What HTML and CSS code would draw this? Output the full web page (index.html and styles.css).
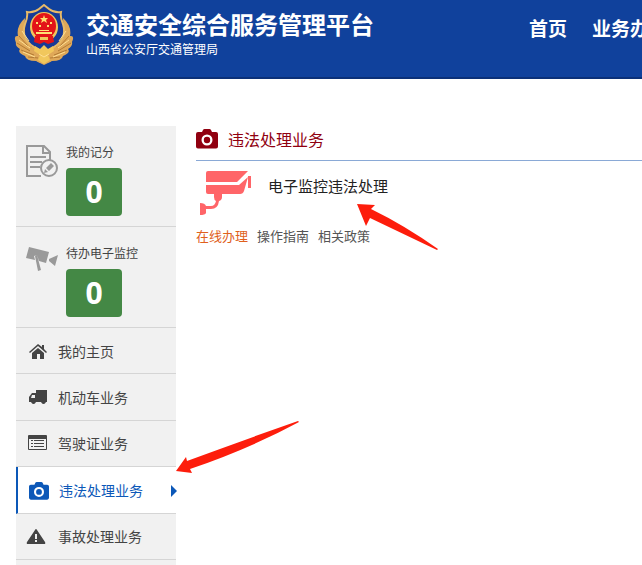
FILE: index.html
```html
<!DOCTYPE html>
<html lang="zh-CN">
<head>
<meta charset="utf-8">
<meta name="viewport" content="width=device-width, initial-scale=1">
<title>交通安全综合服务管理平台</title>
<link rel="stylesheet" href="styles.css">
</head>
<body>
<svg class="defs" aria-hidden="true">
  <symbol id="camera" viewBox="0 0 22 20">
    <path fill-rule="evenodd" d="M2 3h4l1-2q.5-1 1.500-1h5q1 0 1.500 1l1 2h4q2 0 2 2v12.500q0 2-2 2H2q-2 0-2-2V5q0-2 2-2zM11 5.500a5.500 5.500 0 1 0 0 11a5.500 5.500 0 1 0 0-11zm0 2.300a3.200 3.200 0 1 1 0 6.400a3.200 3.200 0 1 1 0-6.400z"/>
  </symbol>
</svg>
<header class="header">
  <svg class="emblem" viewBox="0 0 60 62" aria-hidden="true">
    <g fill="#dfa858">
      <path d="M11 14Q2 22 4 32Q-1 31 2 39Q1 42 6 45Q3 49 11 52Q12 57 22 57L30 61L38 57Q48 57 49 52Q57 49 54 45Q59 42 58 38Q61 31 56 32Q58 22 49 14L50 33L42 43L30 49L18 43L10 33Z"/>
      <path d="M18 42L30 46L42 42L45 50L36 58L30 60L24 58L15 50Z"/>
    </g>
    <path fill="#173a96" stroke="#e8ba68" stroke-width="2" d="M30 1L35 5Q40 9 47 8Q46 13 49 20Q53 33 43 41Q38 45 30 48Q22 45 17 41Q7 33 11 20Q14 13 13 8Q20 9 25 5Z"/>
    <ellipse cx="30" cy="23" rx="14" ry="15" fill="#f1c75c"/>
    <ellipse cx="30" cy="22" rx="12" ry="13" fill="#e31418"/>
    <path fill="#ffe071" d="M30 11l1 3h3l-2 2 1 3-3-2-3 2 1-3-2-2h3zM22 18h2v2h-2zM36 18h2v2h-2zM25 21h2v2h-2zM33 21h2v2h-2zM22 28h16v2H22zM25 26h10v1H25z"/>
    <path fill="#e31418" d="M21 32h18l1 6-6 2-4-2-4 2-6-2z"/>
    <path fill="#f1c75c" d="M26 33h8v3h-8zM21 42l5 3 4-4 4 4 5-3 1 5-6 4 2 5-6 4-6-4 2-5-6-4z"/>
    <g fill="none" stroke="#b27a34" stroke-width="1">
      <path d="M5 32l9 10M3 39l13 8M7 46l13 5M14 53l10 1M55 32l-9 10M57 39l-13 8M53 46l-13 5M46 53l-10 1"/>
    </g>
    <g fill="none" stroke="#ffdf92" stroke-width="1">
      <path d="M8 27l7 10M5 36l11 8M9 48l12 5M52 27l-7 10M55 36l-11 8M51 48l-12 5M25 50l5 3 5-3"/>
    </g>
  </svg>
  <div class="brand">
    <h1 class="brand-title">交通安全综合服务管理平台</h1>
    <p class="brand-sub">山西省公安厅交通管理局</p>
  </div>
  <nav class="nav">
    <a href="#">首页</a>
    <a href="#">业务办理</a>
  </nav>
</header>
<div class="layout">
  <aside class="sidebar">
    <section class="stat">
      <svg class="stat-icon" viewBox="0 0 32 34" fill="none" stroke="#999" stroke-width="2" aria-hidden="true">
        <path d="M15 32H1V2h17l6 6v8M17 2v7h7M4 13h16M4 18h12M4 23h10"/>
        <circle cx="23" cy="24" r="8"/>
        <path fill="#999" stroke="none" d="M18 29l1-4 3 3zM20 24l5-5 3 3-5 5z"/>
      </svg>
      <div class="stat-body">
        <h2 class="stat-label">我的记分</h2>
        <span class="stat-value">0</span>
      </div>
    </section>
    <section class="stat">
      <svg class="stat-icon" viewBox="0 0 32 34" fill="#999" aria-hidden="true">
        <path d="M3 2l20 5-3 11-7-2-2-6-3 1 1 4-9-2zM9 11l2-1 4 15-3 1zM23 14l9-4-3 11-6-5z"/>
      </svg>
      <div class="stat-body">
        <h2 class="stat-label">待办电子监控</h2>
        <span class="stat-value">0</span>
      </div>
    </section>
    <nav class="menu">
      <a class="menu-item" href="#">
        <svg class="menu-icon" viewBox="0 0 20 20" aria-hidden="true"><path d="M10 2l4 3V3h2v4l3 3-1 1-8-7-8 7-1-1zM10 6l6 5v6h-4v-5H9v5H4v-6z"/></svg>
        <span>我的主页</span>
      </a>
      <a class="menu-item" href="#">
        <svg class="menu-icon" viewBox="0 0 20 20" aria-hidden="true"><path fill-rule="evenodd" d="M8 2h11v12h-1a3 3 0 0 1-5 0H8a3 3 0 0 1-5 0H1V9l3-4h4zM4 7l-1 3h4V7z"/><circle cx="5.500" cy="14" r="2"/><circle cx="15.500" cy="14" r="2"/></svg>
        <span>机动车业务</span>
      </a>
      <a class="menu-item" href="#">
        <svg class="menu-icon" viewBox="0 0 20 20" aria-hidden="true"><path fill-rule="evenodd" d="M1 1h17q1 0 1 1v13q0 1-1 1H1q-1 0-1-1V2q0-1 1-1zM1 5v10h17V5z"/><path d="M3 6h2v1H3zM6 6h10v1H6zM3 9h2v1H3zM6 9h10v1H6zM3 12h2v1H3zM6 12h10v1H6z"/></svg>
        <span>驾驶证业务</span>
      </a>
      <a class="menu-item active" href="#" aria-current="page">
        <svg class="menu-icon" aria-hidden="true"><use href="#camera"/></svg>
        <span>违法处理业务</span>
      </a>
      <a class="menu-item" href="#">
        <svg class="menu-icon" viewBox="0 0 20 20" aria-hidden="true"><path fill-rule="evenodd" d="M7 3q1-2 2 0l8 12q1 2-1 2H0q-2 0-1-2zM7 7v5h2V7zM7 13v2h2v-2z"/></svg>
        <span>事故处理业务</span>
      </a>
    </nav>
  </aside>
  <main class="content">
    <h2 class="content-title">
      <svg class="title-icon" aria-hidden="true"><use href="#camera"/></svg>
      <span>违法处理业务</span>
    </h2>
    <article class="service">
      <div class="service-head">
        <svg class="service-icon" viewBox="0 0 52 46" fill="#ff6568" aria-hidden="true">
          <path d="M8 1h40L37 12H6V3q0-2 2-2zM6 15h33l9-8-4 14q-1 3-4 3H8q-2 0-2-2zM48 6h3v12h-3zM14 23h8v4q0 3-3 4-1 8-8 8H6v4q-1 2-6 2V33q5 0 6 3h5q4 0 5-5-2-1-2-4z"/>
        </svg>
        <h3 class="service-name">电子监控违法处理</h3>
      </div>
      <div class="service-links">
        <a class="primary" href="#">在线办理</a>
        <a href="#">操作指南</a>
        <a href="#">相关政策</a>
      </div>
      <svg class="pointer pointer-service" viewBox="0 0 82 46" aria-hidden="true"><path d="M0 0l18 1-4 4q33 16 67 40l-1 1L13 14l-4 8z"/></svg>
    </article>
  </main>
  <svg class="pointer pointer-menu" viewBox="0 0 124 52" aria-hidden="true"><path d="M0 50L10 36l1 4Q65 20 122 0l1 1Q73 28 14 48l2 4z"/></svg>
</div>
</body>
</html>
```
FILE: styles.css
```css
* { box-sizing: border-box; }
body {
  margin: 0;
  background: #fff;
  color: #444;
  font-family: "Noto Sans", "Noto Sans CJK SC", sans-serif;
}
h1, h2, h3, p { margin: 0; font-weight: 400; }
a { color: inherit; text-decoration: none; }
.defs { position: absolute; width: 0; height: 0; }

.header {
  display: flex;
  align-items: flex-start;
  height: 79px;
  padding: 4px 0 0 14px;
  overflow: hidden;
  background: #10419c;
  border-bottom: 2px solid #0b3078;
  color: #fff;
  white-space: nowrap;
}
.emblem { flex: none; width: 60px; height: 62px; }
.brand { flex: none; padding: 4px 0 0 12px; }
.brand-title { font-size: 24px; line-height: 34px; font-weight: 700; }
.brand-sub { font-size: 12px; line-height: 16px; }
.nav {
  display: flex;
  flex: none;
  gap: 25px;
  padding-left: 155px;
  font-size: 19px;
  line-height: 50px;
  font-weight: 700;
}

.layout {
  position: relative;
  display: flex;
  gap: 20px;
  padding: 47px 0 0 16px;
}
.sidebar { flex: none; width: 160px; background: #f1f1f1; }
.stat {
  display: flex;
  gap: 8px;
  padding: 18px 10px 10px;
  border-bottom: 1px solid #d5d5d5;
}
.stat-icon { width: 32px; height: 34px; }
.stat-label { font-size: 12px; line-height: 18px; }
.stat-value {
  display: block;
  width: 56px;
  margin-top: 6px;
  border-radius: 4px;
  background: #448845;
  color: #fff;
  font-size: 30px;
  line-height: 48px;
  font-weight: 700;
  text-align: center;
}
.menu {
  display: grid;
  grid-auto-rows: 1fr;
  min-height: 232px;
  margin-bottom: 8px;
}
.menu-item {
  position: relative;
  display: flex;
  align-items: center;
  gap: 10px;
  padding: 2px 0 0 12px;
  border-bottom: 1px solid #d5d5d5;
  font-size: 14px;
  line-height: 20px;
}
.menu-icon { width: 20px; height: 20px; fill: #444; overflow: visible; }
.menu-item.active {
  border-left: 2px solid #0c58b8;
  padding-left: 11px;
  background: #fff;
  color: #0c58b8;
}
.active .menu-icon { fill: #0c58b8; }
.active::after {
  content: "";
  position: absolute;
  right: -1px;
  border: 6px solid transparent;
  border-left-color: #0c58b8;
  border-right: 0;
}

.content { flex: 1; min-width: 0; }
.content-title {
  display: flex;
  align-items: center;
  gap: 10px;
  height: 35px;
  padding-bottom: 8px;
  border-bottom: 1px solid #8aa9d6;
  color: #900010;
  font-size: 16px;
}
.title-icon { width: 22px; height: 20px; fill: #900010; }
.service { position: relative; }
.service-head {
  display: flex;
  gap: 16px;
  padding: 9px 0 0 4px;
}
.service-icon { width: 52px; height: 46px; }
.service-name { color: #222; font-size: 15px; line-height: 32px; }
.service-links {
  display: flex;
  gap: 9px;
  padding-top: 10px;
  color: #555;
  font-size: 13px;
  line-height: 20px;
}
.service-links .primary { color: #e0601c; }

.pointer { position: absolute; fill: #fd1d0c; }
.pointer-service { left: 161px; top: 43px; width: 82px; height: 46px; }
.pointer-menu { left: 176px; top: 342px; width: 124px; height: 52px; }
```
